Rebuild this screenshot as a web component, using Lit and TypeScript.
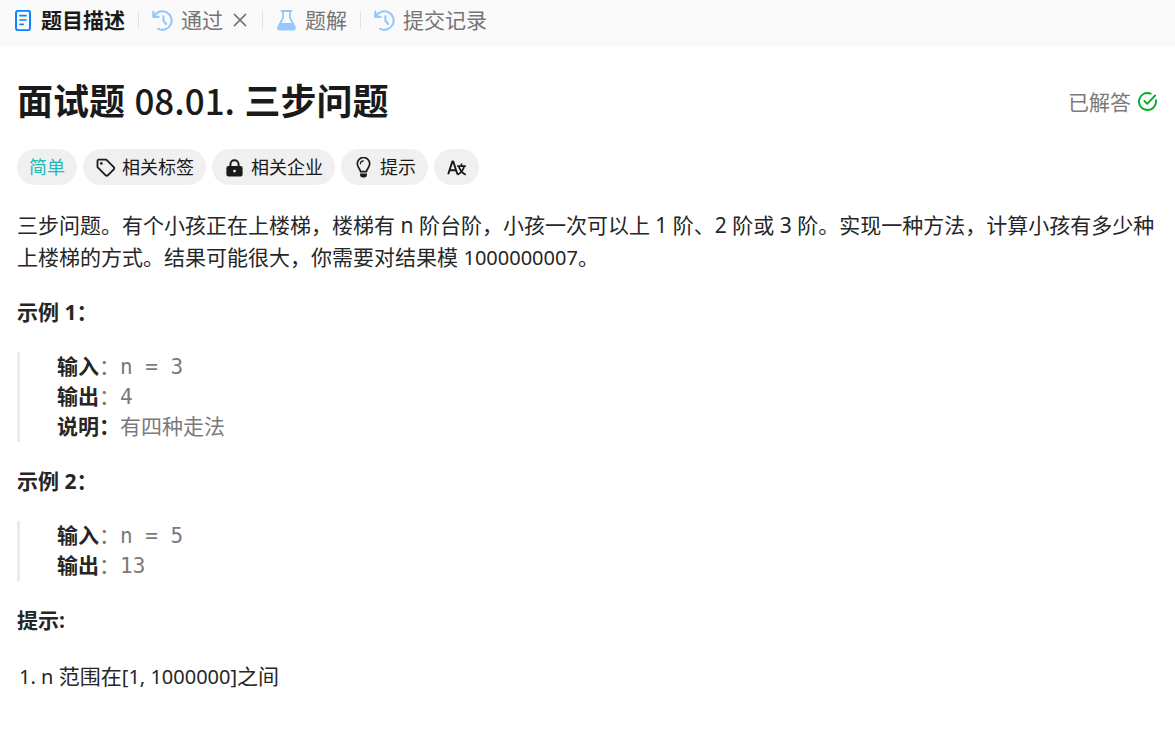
import { LitElement, html, css, svg } from "lit";
import { customElement } from "lit/decorators.js";

const icon = (body: unknown, cls = "") =>
  html`<svg class="icon ${cls}" viewBox="0 0 21 21" aria-hidden="true">${body}</svg>`;

const docIcon = svg`
  <g fill="none" stroke="currentColor" stroke-width="2" stroke-linecap="round">
    <rect x="4" y="0.8" width="14" height="19.400" rx="2.2"/>
    <path d="M8 5.7h6M8 10h6M8 14.3h3.2" stroke-width="1.7"/>
  </g>`;
const historyIcon = svg`
  <g fill="none" stroke="currentColor" stroke-width="2.100" stroke-linecap="round" stroke-linejoin="round">
    <path d="M1.3 1.6v5.3h5.3"/>
    <path d="M1.9 6.6A9.3 9.3 0 1 1 6.2 18.9"/>
    <path d="M11.4 6.2v4.6l2.7 3.2"/>
  </g>`;
const flaskIcon = svg`
  <path fill="currentColor" fill-rule="evenodd" d="M5.6 0h9.8a1 1 0 0 1 0 2h-.6v5.6l4.6 8.6c1 2.2 0 4.3-2.4 4.3H4c-2.400 0-3.400-2.100-2.400-4.300L6.200 7.600V2h-.6a1 1 0 0 1 0-2ZM8 2v6.100L5.400 13h10.200L13 8.100V2Z"/>`;
const closeIcon = svg`
  <path d="M4 4l13 13M17 4L4 17" fill="none" stroke="currentColor" stroke-width="1.9" stroke-linecap="round"/>`;
const tagIcon = svg`
  <path d="M2.500 3.800v6.300l8.200 8.200a1.500 1.500 0 0 0 2.100 0l6-6a1.500 1.500 0 0 0 0-2.100L11.300 2.700H3.600a1.100 1.100 0 0 0-1.100 1.100Z" fill="none" stroke="currentColor" stroke-width="1.8" stroke-linejoin="round"/>
  <circle cx="6.300" cy="6.400" r="1.300" fill="currentColor"/>`;
const lockIcon = svg`
  <path d="M6.400 10V7.400a4.100 4.100 0 0 1 8.200 0V10" fill="none" stroke="currentColor" stroke-width="2"/>
  <path fill="currentColor" fill-rule="evenodd" d="M4.500 9h12a2.100 2.100 0 0 1 2.100 2.100v6.300a2.100 2.100 0 0 1-2.100 2.100h-12a2.100 2.100 0 0 1-2.100-2.100v-6.300A2.100 2.100 0 0 1 4.500 9Zm6 3.700a1.400 1.400 0 1 0 0 2.800 1.400 1.400 0 0 0 0-2.800Z"/>`;
const bulbIcon = svg`
  <path d="M7.600 14.700c0-2.600-3.300-4.300-3.300-8a6.200 6.200 0 0 1 12.400 0c0 3.700-3.300 5.400-3.300 8Z" fill="none" stroke="currentColor" stroke-width="1.700" stroke-linejoin="round"/>
  <path d="M7.400 6.800a3.100 3.100 0 0 1 3-3" fill="none" stroke="currentColor" stroke-width="1.200" stroke-linecap="round"/>
  <path d="M7 16.600h7v1a3 3 0 0 1-3 3h-1a3 3 0 0 1-3-3Z" fill="currentColor"/>`;
const translateIcon = svg`
  <g fill="none" stroke="currentColor" stroke-width="1.900" stroke-linejoin="round">
    <path d="M2.200 17.200L6.400 4.400h.8l4.200 12.800M3.500 13.200h6.600"/>
    <path d="M11.200 9.200h8.600M15.500 6.600v2.600M18.200 9.200c-.7 3.400-3 6.600-6.800 8.600M12.800 9.200c.8 3.400 3.200 6.600 7 8.600" stroke-width="1.700"/>
  </g>`;
const solvedIcon = svg`
  <g fill="none" stroke="currentColor" stroke-width="1.900" stroke-linecap="round" stroke-linejoin="round">
    <path d="M13.700 1.600A8.500 8.500 0 1 0 18.900 8.200"/>
    <path d="M7.300 8.900l2.900 2.900 7.900-8.300"/>
  </g>`;

@customElement("app-root")
export class AppRoot extends LitElement {
  static styles = css`
    :host {
      display: block;
      min-height: 100vh;
      background: #fff;
      color: #262626;
      font: 21px/32px "Noto Sans", "Noto Sans CJK SC", sans-serif;
    }
    button {
      font: inherit;
      color: inherit;
      border: 0;
      padding: 0;
      background: none;
      cursor: pointer;
      display: flex;
      align-items: center;
      white-space: nowrap;
    }
    .icon {
      width: 21px;
      height: 21px;
      flex: none;
      display: block;
    }
    .en {
      font-size: 20px;
      line-height: 20px;
    }
    .tabs {
      display: flex;
      align-items: center;
      padding: 4px 12px 11px;
      background: #fafafa;
      color: #757575;
    }
    .tab {
      gap: 8px;
    }
    .tab .icon {
      color: #96c7fd;
    }
    .tab.active {
      color: #1a1a1a;
      font-weight: 600;
    }
    .tab.active .icon {
      color: #0a84ff;
    }
    .close {
      margin-left: 8px;
    }
    .close .icon {
      width: 18px;
      height: 18px;
    }
    .divider {
      width: 1px;
      height: 18px;
      margin: 0 13px;
      background: #e2e2e2;
    }
    .content {
      padding: 32px 17px 24px;
    }
    .head {
      display: flex;
      align-items: center;
      justify-content: space-between;
    }
    h1 {
      margin: 0;
      font-size: 36px;
      line-height: 46px;
      font-weight: 600;
      color: #1a1a1a;
    }
    h1 .en {
      font-family: "Noto Sans CJK SC", sans-serif;
      font-size: 35px;
      line-height: 36px;
      font-weight: 500;
    }
    .status {
      display: flex;
      align-items: center;
      gap: 6px;
      color: #7a7a7a;
      white-space: nowrap;
    }
    .status .icon {
      color: #02b128;
    }
    .chips {
      display: flex;
      flex-wrap: wrap;
      gap: 6px;
      margin: 24px 0;
    }
    .chip {
      gap: 6px;
      height: 36px;
      padding: 0 12px;
      border-radius: 18px;
      background: #f0f0f0;
      color: #1a1a1a;
      font-size: 18px;
    }
    .chip.easy {
      color: #1cbaba;
    }
    p {
      margin: 0;
    }
    h2 {
      margin: 24px 0;
      font-size: 21px;
      line-height: 31px;
      font-weight: 700;
    }
    pre {
      margin: 0;
      padding-left: 37px;
      border-left: 3px solid #ebebeb;
      color: #7a7a7a;
      font: 21px/30px "DejaVu Sans Mono", "Noto Sans CJK SC", monospace;
    }
    pre b,
    pre .cjk {
      font-family: "Noto Sans CJK SC", sans-serif;
      line-height: 20px;
    }
    pre b {
      color: #262626;
    }
    ol {
      margin: 0;
      padding-left: 24px;
    }
    li::marker {
      font-size: 20px;
    }
  `;

  render() {
    const divider = html`<span class="divider"></span>`;
    return html`
      <nav class="tabs">
        <button class="tab active">${icon(docIcon)}题目描述</button>
        ${divider}
        <button class="tab">${icon(historyIcon)}通过</button>
        <button class="close" aria-label="关闭">${icon(closeIcon)}</button>
        ${divider}
        <button class="tab">${icon(flaskIcon)}题解</button>
        ${divider}
        <button class="tab">${icon(historyIcon)}提交记录</button>
      </nav>
      <main class="content">
        <div class="head">
          <h1>面试题 <span class="en">08.01.</span> 三步问题</h1>
          <div class="status">已解答${icon(solvedIcon)}</div>
        </div>
        <div class="chips">
          <button class="chip easy">简单</button>
          <button class="chip">${icon(tagIcon)}相关标签</button>
          <button class="chip">${icon(lockIcon)}相关企业</button>
          <button class="chip">${icon(bulbIcon)}提示</button>
          <button class="chip" aria-label="翻译">${icon(translateIcon)}</button>
        </div>
        <p>三步问题。有个小孩正在上楼梯，楼梯有 n 阶台阶，小孩一次可以上 1 阶、2 阶或 3 阶。实现一种方法，计算小孩有多少种上楼梯的方式。结果可能很大，你需要对结果模 <span class="en">1000000007</span>。</p>
        <h2>示例 1：</h2>
        <pre><b>输入</b><span class="cjk">：</span>n = 3
<b>输出</b><span class="cjk">：</span>4
<b>说明：</b><span class="cjk">有四种走法</span></pre>
        <h2>示例 2：</h2>
        <pre><b>输入</b><span class="cjk">：</span>n = 5
<b>输出</b><span class="cjk">：</span>13</pre>
        <h2>提示:</h2>
        <ol>
          <li><span class="en">n</span> 范围在<span class="en">[1, 1000000]</span>之间</li>
        </ol>
      </main>
    `;
  }
}
